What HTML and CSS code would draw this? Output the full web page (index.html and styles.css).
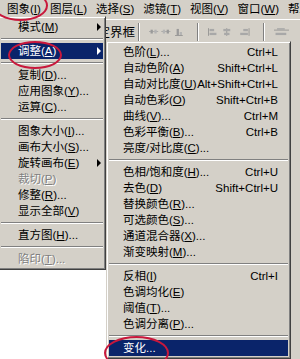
FILE: index.html
```html
<!DOCTYPE html>
<html lang="zh-CN">
<head>
    <meta charset="UTF-8">
    <meta name="viewport" content="width=device-width, initial-scale=1.0">
    <title>图象 - 调整</title>
    <link rel="stylesheet" href="styles.css">
</head>
<body>
    <div class="app">
        <div class="menubar">
            <span class="mb-item">图象(<u>I</u>)</span>
            <span class="mb-item">图层(<u>L</u>)</span>
            <span class="mb-item">选择(<u>S</u>)</span>
            <span class="mb-item">滤镜(<u>T</u>)</span>
            <span class="mb-item">视图(<u>V</u>)</span>
            <span class="mb-item">窗口(<u>W</u>)</span>
            <span class="mb-item">帮助(<u>H</u>)</span>
        </div>

        <div class="toolbar">
            <span class="check"></span>
            <span class="tb-label">显示定界框</span>
            <span class="tb-sep"></span>
            <svg class="tb-icons" width="46" height="10" viewBox="0 0 46 10">
                <rect x="0" y="4" width="12" height="1" fill="#a0a0a0"/>
                <rect x="2" y="2" width="3" height="5" fill="#9a9a9a"/>
                <rect x="7" y="2" width="3" height="5" fill="#b4b4b4"/>
                <rect x="16" y="4" width="12" height="1" fill="#a0a0a0"/>
                <rect x="18" y="2" width="3" height="5" fill="#b4b4b4"/>
                <rect x="23" y="2" width="3" height="5" fill="#9a9a9a"/>
                <rect x="36" y="1" width="3" height="8" fill="#9a9a9a"/>
                <rect x="34" y="9" width="10" height="1" fill="#8a8a8a"/>
                <rect x="40" y="5" width="3" height="4" fill="#b4b4b4"/>
            </svg>
            <span class="tb-sep"></span>
            <svg class="tb-icons" width="54" height="10" viewBox="0 0 54 10">
                <rect x="0" y="0" width="1" height="10" fill="#8a8a8a"/>
                <rect x="2" y="1" width="6" height="3" fill="#a8a8a8"/>
                <rect x="2" y="6" width="9" height="3" fill="#a8a8a8"/>
                <rect x="24" y="0" width="1" height="10" fill="#8a8a8a"/>
                <rect x="20" y="1" width="9" height="3" fill="#a8a8a8"/>
                <rect x="21" y="6" width="7" height="3" fill="#a8a8a8"/>
                <rect x="53" y="0" width="1" height="10" fill="#8a8a8a"/>
                <rect x="46" y="1" width="6" height="3" fill="#a8a8a8"/>
                <rect x="42" y="6" width="10" height="3" fill="#a8a8a8"/>
            </svg>
            <span class="tb-sep"></span>
            <svg class="tb-icons" width="20" height="10" viewBox="0 0 20 10">
                <rect x="0" y="2" width="20" height="1" fill="#8a8a8a"/>
                <rect x="4" y="0" width="10" height="2" fill="#a8a8a8"/>
                <rect x="2" y="6" width="14" height="3" fill="#a8a8a8"/>
            </svg>
        </div>

        <div class="workspace">
            <div class="canvas-area"></div>
            <div class="palette-well"></div>
        </div>

        <div class="menu menu-image">
            <div class="item"><span>模式(<u>M</u>)</span><span class="arrow"></span></div>
            <div class="sep"></div>
            <div class="item active"><span>调整(<u>A</u>)</span><span class="arrow"></span></div>
            <div class="sep"></div>
            <div class="item"><span>复制(<u>D</u>)...</span></div>
            <div class="item"><span>应用图象(<u>Y</u>)...</span></div>
            <div class="item"><span>运算(<u>C</u>)...</span></div>
            <div class="sep"></div>
            <div class="item"><span>图象大小(<u>I</u>)...</span></div>
            <div class="item"><span>画布大小(<u>S</u>)...</span></div>
            <div class="item"><span>旋转画布(<u>E</u>)</span><span class="arrow"></span></div>
            <div class="item disabled"><span>裁切(<u>P</u>)</span></div>
            <div class="item"><span>修整(<u>R</u>)...</span></div>
            <div class="item"><span>显示全部(<u>V</u>)</span></div>
            <div class="sep"></div>
            <div class="item"><span>直方图(<u>H</u>)...</span></div>
            <div class="sep"></div>
            <div class="item disabled"><span>陷印(<u>T</u>)...</span></div>
        </div>

        <div class="menu menu-adjust">
            <div class="item"><span>色阶(<u>L</u>)...</span><span class="key">Ctrl+L</span></div>
            <div class="item"><span>自动色阶(<u>A</u>)</span><span class="key">Shift+Ctrl+L</span></div>
            <div class="item"><span>自动对比度(<u>U</u>)</span><span class="key">Alt+Shift+Ctrl+L</span></div>
            <div class="item"><span>自动色彩(<u>O</u>)</span><span class="key">Shift+Ctrl+B</span></div>
            <div class="item"><span>曲线(<u>V</u>)...</span><span class="key">Ctrl+M</span></div>
            <div class="item"><span>色彩平衡(<u>B</u>)...</span><span class="key">Ctrl+B</span></div>
            <div class="item"><span>亮度/对比度(<u>C</u>)...</span></div>
            <div class="sep"></div>
            <div class="item"><span>色相/饱和度(<u>H</u>)...</span><span class="key">Ctrl+U</span></div>
            <div class="item"><span>去色(<u>D</u>)</span><span class="key">Shift+Ctrl+U</span></div>
            <div class="item"><span>替换颜色(<u>R</u>)...</span></div>
            <div class="item"><span>可选颜色(<u>S</u>)...</span></div>
            <div class="item"><span>通道混合器(<u>X</u>)...</span></div>
            <div class="item"><span>渐变映射(<u>M</u>)...</span></div>
            <div class="sep"></div>
            <div class="item"><span>反相(<u>I</u>)</span><span class="key">Ctrl+I</span></div>
            <div class="item"><span>色调均化(<u>E</u>)</span></div>
            <div class="item"><span>阈值(<u>T</u>)...</span></div>
            <div class="item"><span>色调分离(<u>P</u>)...</span></div>
            <div class="sep"></div>
            <div class="item active"><span>变化...</span></div>
        </div>

        <div class="mark mark-image"></div>
        <div class="mark mark-adjust"></div>
        <div class="mark mark-variations"></div>
    </div>
</body>
</html>
```

FILE: styles.css
```css
body {
    margin: 0;
    padding: 0;
    background: #ffffff;
    font-family: "Liberation Sans", "Noto Sans CJK SC", sans-serif;
    font-size: 11.5px;
    color: #000000;
    overflow: hidden;
}
.app {
    position: relative;
    width: 300px;
    height: 359px;
    overflow: hidden;
    display: flex;
    flex-direction: column;
}
u {
    text-decoration: underline;
    text-underline-offset: 1px;
}

/* menu bar */
.menubar {
    height: 19px;
    background: #d4d0c8;
    display: flex;
    align-items: center;
    padding-left: 2.5px;
    white-space: nowrap;
}
.mb-item {
    padding: 0 4.5px;
    line-height: 17px;
}

/* options bar */
.toolbar {
    height: 23px;
    background: #d4d0c8;
    border-top: 1px solid #ffffff;
    display: flex;
    align-items: center;
    padding-left: 58px;
    white-space: nowrap;
}
.check {
    width: 11px;
    height: 11px;
    border: 1px solid #808080;
    background: #ffffff;
    margin-right: 4px;
}
.tb-label {
    font-size: 12.5px;
    margin-right: 1px;
}
.tb-sep {
    width: 0;
    height: 18px;
    border-left: 1px solid #808080;
    border-right: 1px solid #ffffff;
    margin: 0 9px 0 2px;
}
.tb-icons {
    display: block;
    margin-right: 11px;
}

.workspace {
    flex: 1;
    display: flex;
}
.canvas-area {
    flex: 1;
    background: #ffffff;
}
.palette-well {
    width: 9px;
    background: #d4d0c8;
}

/* drop-down menus */
.menu {
    position: absolute;
    background: #d4d0c8;
    border: 1px solid;
    border-color: #d4d0c8 #404040 #404040 #d4d0c8;
    box-shadow: inset 1px 1px #ffffff, inset -1px -1px #808080;
    padding: 2px;
    white-space: nowrap;
}
.menu-image {
    left: -2px;
    top: 16px;
    width: 102px;
}
.menu-adjust {
    left: 106px;
    top: 41px;
    width: 179px;
}
.item {
    height: 16px;
    line-height: 16px;
    display: flex;
    align-items: center;
    justify-content: space-between;
    padding: 0 2px 0 17px;
}
.menu-adjust .item {
    padding: 0 10px 0 14px;
}
.item.active {
    background: #0a246a;
    color: #ffffff;
}
.item.disabled {
    color: #808080;
    text-shadow: 1px 1px 0 #ffffff;
}
.arrow {
    width: 0;
    height: 0;
    border-left: 4px solid #000000;
    border-top: 4px solid transparent;
    border-bottom: 4px solid transparent;
}
.item.active .arrow {
    border-left-color: #ffffff;
}
.sep {
    height: 8px;
    display: flex;
    align-items: center;
}
.sep::before {
    content: "";
    flex: 1;
    border-top: 1px solid #808080;
    border-bottom: 1px solid #ffffff;
}

/* red hand-drawn circles */
.mark {
    position: absolute;
    border: 2px solid #c8183c;
    border-radius: 50%;
}
.mark-image {
    left: -7px;
    top: -10px;
    width: 51px;
    height: 27px;
}
.mark-adjust {
    left: 8px;
    top: 41px;
    width: 50px;
    height: 24px;
}
.mark-variations {
    left: 104px;
    top: 336px;
    width: 61px;
    height: 30px;
}
```
